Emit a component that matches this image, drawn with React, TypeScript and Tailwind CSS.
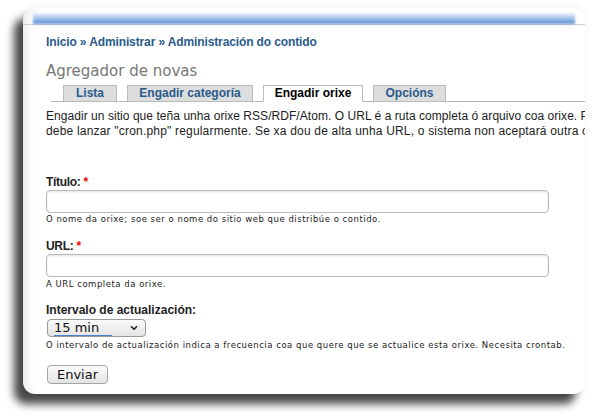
import { ChevronDown } from 'lucide-react';

const sans = "font-['Liberation_Sans',Arial,sans-serif]";
const deja = "font-['DejaVu_Sans',Verdana,sans-serif]";

const tabs = [
  { label: 'Lista', w: 'w-[54px]', active: false },
  { label: 'Engadir categoría', w: 'w-[126px]', active: false },
  { label: 'Engadir orixe', w: 'w-[100px]', active: true },
  { label: 'Opcións', w: 'w-[73px]', active: false },
];

function Required() {
  return <span className="text-[#e00] ml-[3px]">*</span>;
}

function Help({ children }: { children: React.ReactNode }) {
  return (
    <div className={`${deja} text-[8.5px] leading-[10px] tracking-[0.52px] text-[#222] whitespace-nowrap`}>
      {children}
    </div>
  );
}

function TextInput() {
  return (
    <div className="w-[503px] h-[23px] rounded-[4px] border border-[#b9b9b9] bg-white shadow-[inset_0_1px_2px_rgba(0,0,0,0.12)]" />
  );
}

export default function App() {
  return (
    <div className="w-[592px] h-[418px] bg-white overflow-hidden pt-[8px] pl-[23px]">
      {/* Card */}
      <div className="w-[562px] h-[386px] rounded-[12px] bg-white overflow-hidden shadow-[-9px_10px_9px_rgba(0,0,0,0.72),0_-2px_6px_rgba(0,0,0,0.05),inset_10px_0_8px_-6px_rgba(0,0,0,0.09)]">
        {/* Blurred header strip */}
        <div className="h-[17px] pt-[5px] px-[10px] border-b border-[#d6d0c8]">
          <div className="h-[11px] blur-[1px] bg-gradient-to-b from-[#eef3fb] via-[#a3c1e9] to-[#5a8cd2]" />
        </div>

        <div className="pl-[23px]">
          {/* Breadcrumb */}
          <div className={`${sans} mt-[10px] text-[12px] leading-[15px] font-bold tracking-[-0.12px] text-[#2a5b8c] whitespace-nowrap`}>
            Inicio » Administrar » Administración do contido
          </div>

          {/* Title */}
          <h1 className={`${deja} mt-[12px] text-[15px] leading-[18px] text-[#777]`}>
            Agregador de novas
          </h1>

          {/* Tabs */}
          <div className="mt-[5px] ml-[5px] pl-[12px] flex gap-[10px] border-b border-[#b5b5b5] h-[17px] items-end">
            {tabs.map((t) => (
              <div
                key={t.label}
                className={`${sans} ${t.w} h-[17px] -mb-px text-center text-[12px] leading-[15px] font-bold border border-[#bbb] ${
                  t.active
                    ? 'bg-white text-black border-b-white'
                    : 'bg-[#ddd] text-[#2a5b8c]'
                }`}
              >
                {t.label}
              </div>
            ))}
          </div>

          {/* Description */}
          <div className={`${sans} mt-[7px] text-[12px] leading-[15px] text-[#222] whitespace-nowrap`}>
            <div className="tracking-[0.05px]">
              Engadir un sitio que teña unha orixe RSS/RDF/Atom. O URL é a ruta completa ó arquivo coa orixe. Para que
            </div>
            <div className="tracking-[0.19px]">
              debe lanzar "cron.php" regularmente. Se xa dou de alta unha URL, o sistema non aceptará outra orixe.
            </div>
          </div>

          {/* Título */}
          <div className={`${sans} mt-[36px] text-[12px] leading-[15px] font-bold text-[#222] tracking-[-0.3px]`}>
            Título:<Required />
          </div>
          <TextInput />
          <div className="mt-[1px]">
            <Help>O nome da orixe; soe ser o nome do sitio web que distribúe o contido.</Help>
          </div>

          {/* URL */}
          <div className={`${sans} mt-[15px] text-[12px] leading-[15px] font-bold text-[#222] tracking-[-0.3px]`}>
            URL:<Required />
          </div>
          <TextInput />
          <div className="mt-[2px]">
            <Help>A URL completa da orixe.</Help>
          </div>

          {/* Intervalo */}
          <div className={`${sans} mt-[14px] text-[12px] leading-[15px] font-bold text-[#222]`}>
            Intervalo de actualización:
          </div>
          <div className="mt-[1px] ml-[1px] w-[99px] h-[18px] rounded-[4px] border border-[#999] bg-gradient-to-b from-[#fbfbfb] to-[#e4e4e4] flex items-center pl-[6px] pr-[6px]">
            <span className={`${deja} text-[13px] leading-[14px] text-[#111] border-b border-[#4a7fd6] w-[58px]`}>
              15 min
            </span>
            <ChevronDown className="ml-auto w-[10px] h-[10px] text-[#222]" strokeWidth={4} />
          </div>
          <div className="mt-[3px]">
            <Help>O intervalo de actualización indica a frecuencia coa que quere que se actualice esta orixe. Necesita crontab.</Help>
          </div>

          {/* Submit */}
          <button
            className={`${deja} mt-[15px] ml-[1px] w-[61px] h-[19px] rounded-[4px] border border-[#a5a5a5] bg-gradient-to-b from-[#fcfcfc] to-[#e3e3e3] text-[13px] leading-[17px] text-[#111]`}
          >
            Enviar
          </button>
        </div>
      </div>
    </div>
  );
}
